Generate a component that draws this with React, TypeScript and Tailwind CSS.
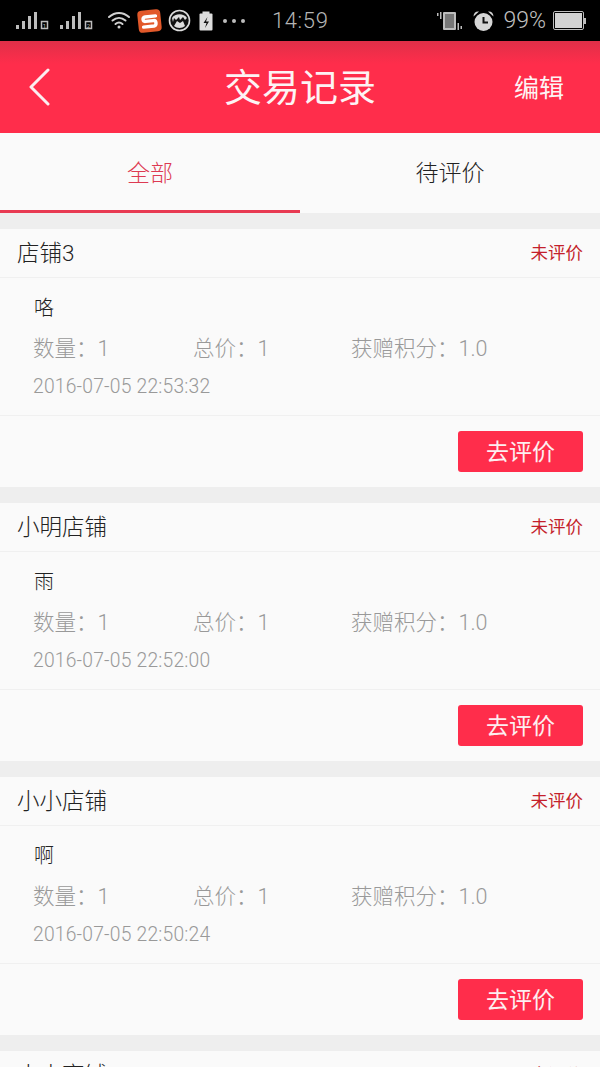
import React from 'react';

const cjk = "font-['Roboto','Noto_Sans_CJK_SC',sans-serif]";

const orders = [
  { shop: '店铺3', item: '咯', time: '2016-07-05 22:53:32' },
  { shop: '小明店铺', item: '雨', time: '2016-07-05 22:52:00' },
  { shop: '小小店铺', item: '啊', time: '2016-07-05 22:50:24' },
];

const Signal = ({ n }: { n: string }) => (
  <svg width="41" height="20" viewBox="0 0 41 20" fill="#bdbdbd">
    <rect x="0" y="14" width="3" height="4" />
    <rect x="6" y="10" width="3" height="8" />
    <rect x="12" y="5" width="3" height="13" />
    <rect x="18" y="1" width="3" height="17" />
    <rect x="25.5" y="10.5" width="6" height="7" fill="none" stroke="#bdbdbd" strokeWidth="1.5" />
    <text x="28.5" y="16.5" fontSize="6" textAnchor="middle" fontFamily="Roboto">{n}</text>
  </svg>
);

const StatusBar = () => (
  <div className="h-[41px] shrink-0 bg-black flex items-center relative">
    <div className="flex items-center pl-[16px] gap-[3px] mt-[1px]">
      <Signal n="1" />
      <Signal n="2" />
    </div>
    {/* wifi */}
    <svg className="ml-[6px]" width="24" height="22" viewBox="0 0 24 22" fill="none" stroke="#d0d0d0" strokeWidth="2" strokeLinecap="round">
      <path d="M2 7c6-5.500 14-5.500 20 0" />
      <path d="M5.500 10.500c4-3.500 9-3.500 13 0" />
      <path d="M8.500 14c2-1.700 5-1.700 7 0" />
      <circle cx="12" cy="17" r="1.500" fill="#d0d0d0" stroke="none" />
    </svg>
    {/* sogou */}
    <div className="ml-[7px] w-[23px] h-[22px] rounded-[4px] bg-[#e2592a] flex items-center justify-center -rotate-6">
      <svg width="17" height="15" viewBox="0 0 17 15" fill="none" stroke="#fff" strokeWidth="3.400" strokeLinecap="round" strokeLinejoin="round">
        <path d="M15 2.500H4.500C1.500 2.500 1.500 7 4.500 7h8c3 0 3 5 0 5.500H2" />
      </svg>
    </div>
    {/* avatar badge */}
    <svg className="ml-[7px]" width="23" height="23" viewBox="0 0 23 23">
      <circle cx="11.500" cy="11.500" r="10" fill="#111" stroke="#ddd" strokeWidth="1.600" />
      <path d="M4 9c3-5 12-5 15 0l-2 2-2-3-3 3-1-3-3 3-2-2-1 4z" fill="#ddd" />
      <path d="M6 17l3-5 3 2 3-2 2 5c-3 2.500-8 2.500-11 0z" fill="#ddd" />
    </svg>
    {/* battery saver */}
    <svg className="ml-[8px]" width="14" height="20" viewBox="0 0 14 20">
      <rect x="3.500" y="0.500" width="7" height="3" fill="#ddd" />
      <rect x="0.500" y="2.500" width="13" height="17" rx="1" fill="#ddd" />
      <path d="M8.500 6L4.500 12h3l-1.500 5 4-6.500h-3z" fill="#111" />
    </svg>
    <div className="ml-[10px] flex gap-[5px]">
      <span className="w-[4px] h-[4px] rounded-full bg-[#bdbdbd]" />
      <span className="w-[4px] h-[4px] rounded-full bg-[#bdbdbd]" />
      <span className="w-[4px] h-[4px] rounded-full bg-[#bdbdbd]" />
    </div>
    <span className="ml-[27px] text-[22px] leading-none text-[#b5b5b5] font-['Roboto',sans-serif] font-light tracking-[0.6px]">14:59</span>
    {/* vibrate */}
    <svg className="ml-[109px]" width="25" height="20" viewBox="0 0 25 20" fill="#bdbdbd">
      <rect x="0" y="2" width="1.500" height="3" />
      <rect x="3" y="1" width="1.500" height="7" />
      <rect x="6" y="1" width="13" height="18" rx="1" />
      <rect x="8" y="3" width="9" height="14" fill="#777" />
      <rect x="20.500" y="12" width="1.500" height="7" />
      <rect x="23.500" y="15" width="1.500" height="3" />
    </svg>
    {/* alarm */}
    <svg className="ml-[10px]" width="23" height="22" viewBox="0 0 23 22">
      <circle cx="11.500" cy="12" r="9" fill="#d6d6d6" />
      <path d="M1.500 6.500C1.500 3 4 1 7 1.500zM21.500 6.500C21.500 3 19 1 16 1.500z" fill="#d6d6d6" />
      <path d="M11.500 7v5.500h4.500" fill="none" stroke="#111" strokeWidth="2" />
    </svg>
    <span className="ml-[8px] text-[23px] leading-none text-[#c0c0c0] font-['Roboto',sans-serif] font-light">99%</span>
    {/* battery */}
    <div className="ml-[7px] flex items-center">
      <div className="w-[31px] h-[19px] border border-[#bdbdbd] p-[1px] rounded-[2px]">
        <div className="w-full h-full bg-[#d2d2d2]" />
      </div>
      <div className="w-[2px] h-[6px] bg-[#bdbdbd]" />
    </div>
  </div>
);

const Header = () => (
  <div className="h-[92px] shrink-0 bg-gradient-to-b from-[#e02f48] via-[#ff2d4b] via-[25%] to-[#ff2d4b] flex items-center justify-between relative">
    <svg className="ml-[27px]" width="25" height="38" viewBox="0 0 25 38" fill="none" stroke="#fbeef0" strokeWidth="3" strokeLinecap="round" strokeLinejoin="round">
      <path d="M21 2L4 19l17 17" />
    </svg>
    <h1 className={`${cjk} absolute inset-x-0 top-[28px] text-center text-[38px] leading-none text-[#fdf3f4] font-normal`}>交易记录</h1>
    <span className={`${cjk} mr-[36px] mt-[3px] text-[25px] leading-none text-[#fdf3f4] font-normal`}>编辑</span>
  </div>
);

const Tabs = () => (
  <div className={`${cjk} h-[80px] shrink-0 bg-[#fafafa] grid grid-cols-2 text-[23px] font-light`}>
    <div className="flex items-center justify-center border-b-[3px] border-[#e83a52] text-[#dd3a52] pt-[6px]">全部</div>
    <div className="flex items-center justify-center text-[#222] pt-[6px] pb-[3px]">待评价</div>
  </div>
);

const OrderCard = ({ shop, item, time }: { shop: string; item: string; time: string }) => (
  <div className={`${cjk} bg-[#fafafa] mt-[16px] shrink-0 font-light`}>
    <div className="h-[49px] flex items-center justify-between px-[17px] border-b border-[#f0f0f0]">
      <span className="text-[22.500px] text-[#222] mt-[1px]">{shop}</span>
      <span className="text-[17.500px] text-[#c41f2c] font-normal">未评价</span>
    </div>
    <div className="h-[138px] border-b border-[#f0f0f0] pl-[33px] flex flex-col">
      <div className="mt-[16px] text-[20px] leading-[28px] text-[#222] pl-[1px]">{item}</div>
      <div className="mt-[13px] grid grid-cols-[160px_158px_1fr] text-[21.500px] leading-[28px] text-[#999]">
        <span>数量：1</span>
        <span>总价：1</span>
        <span>获赠积分：1.0</span>
      </div>
      <div className="mt-[12px] text-[19.300px] leading-[24px] text-[#999] tracking-[0.2px]">{time}</div>
    </div>
    <div className="h-[71px] flex justify-end pt-[15px] pr-[17px]">
      <button className="w-[125px] h-[41px] rounded-[3px] bg-[#ff2d4b] text-[23px] text-[#fdeef0] font-normal flex items-center justify-center pt-[4px]">去评价</button>
    </div>
  </div>
);

export default function App() {
  return (
    <div className="w-[600px] h-[1067px] overflow-hidden bg-[#eeeeee] flex flex-col">
      <StatusBar />
      <Header />
      <Tabs />
      {orders.map((o, i) => (
        <OrderCard key={i} shop={o.shop} item={o.item} time={o.time} />
      ))}
      {/* next card, cut off by the bottom of the screen */}
      <div className={`${cjk} bg-[#fafafa] mt-[16px] h-[49px] shrink-0 flex items-center justify-between px-[17px] font-light`}>
        <span className="text-[22.500px] text-[#222] mt-[1px]">小小商铺</span>
        <span className="text-[17.500px] text-[#c41f2c] font-normal">未评价</span>
      </div>
    </div>
  );
}
